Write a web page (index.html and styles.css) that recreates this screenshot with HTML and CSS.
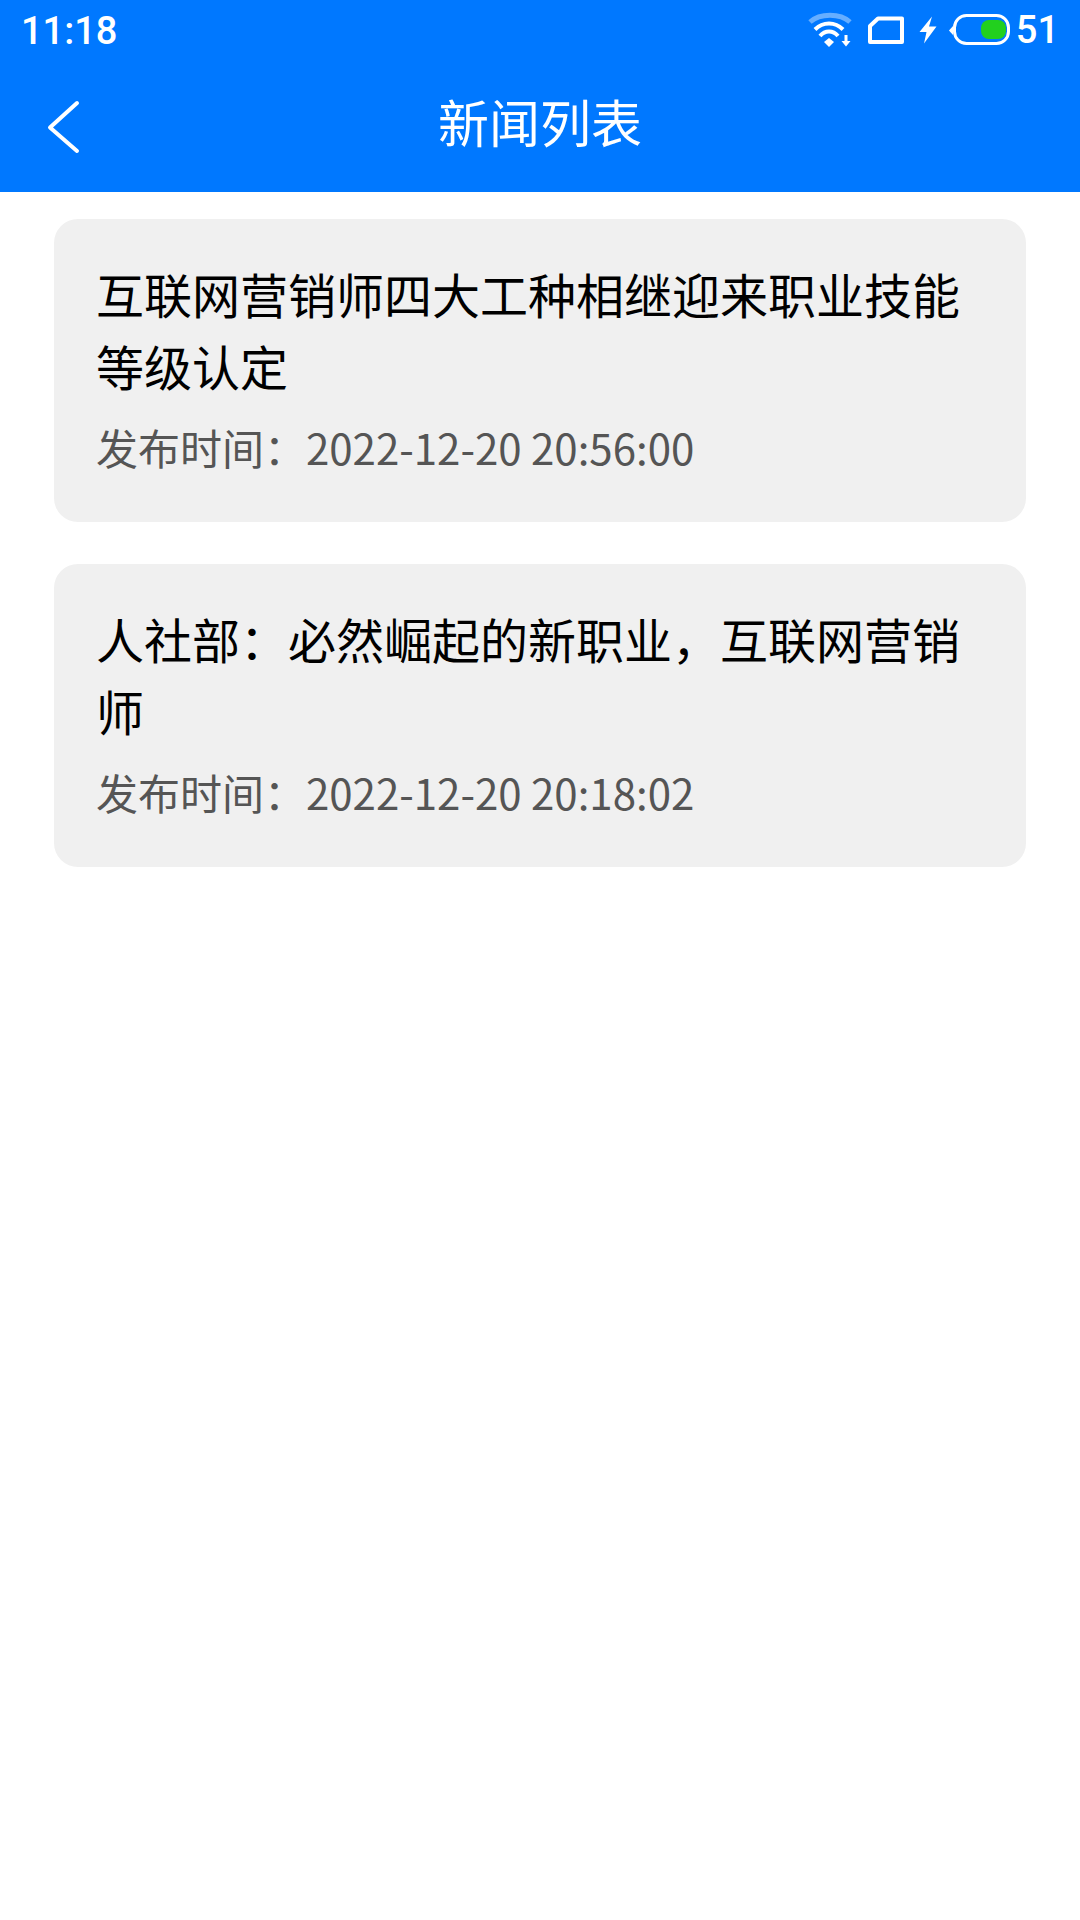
FILE: index.html
```html
<!DOCTYPE html>
<html lang="zh-CN">
<head>
<meta charset="utf-8">
<title>新闻列表</title>
<link rel="stylesheet" href="styles.css">
</head>
<body>
<header class="top">
  <div class="status">
    <span class="clock">11:18</span>
    <div class="status-icons">
      <svg class="ic-wifi" width="44" height="36" viewBox="0 0 44 36" fill="none">
        <path d="M2 10C12 1 32 1 42 10" stroke="#fff" stroke-opacity=".4" stroke-width="5"/>
        <path d="M7 17.500C15 9.500 27 9.500 35 17.500" stroke="#fff" stroke-width="4"/>
        <path d="M12 24C17 18 25 18 30 24" stroke="#fff" stroke-width="4"/>
        <path d="M16 30L21 26L26 30L21 35Z" fill="#fff"/>
        <path d="M38 23V30" stroke="#fff" stroke-width="3"/>
        <path d="M33.500 29H42.500L38 34.500Z" fill="#fff"/>
      </svg>
      <svg class="ic-sim" width="38" height="30" viewBox="0 0 38 30" fill="none">
        <path d="M11 3.500H35V27H3V11Z" stroke="#fff" stroke-width="4" stroke-linejoin="round"/>
      </svg>
      <svg class="ic-bolt" width="18" height="28" viewBox="0 0 18 28">
        <path d="M13 0.500L0.500 16H7.500L5 27.500L17.500 10.500H10Z" fill="#fff"/>
      </svg>
      <svg class="ic-batt" width="62" height="32" viewBox="0 0 62 32" fill="none">
        <path d="M0 16.500L4 12V21Z" fill="#fff"/>
        <rect x="5.500" y="1.500" width="54" height="28" rx="12" stroke="#fff" stroke-width="3"/>
        <rect x="32" y="6" width="25" height="19" rx="8" fill="#22d01e"/>
      </svg>
      <span class="level">51</span>
    </div>
  </div>
  <div class="nav">
    <svg class="back" width="34" height="54" viewBox="0 0 34 54" fill="none">
      <path d="M30 3L3 27.500L30 51" stroke="#fff" stroke-width="4" stroke-linecap="round" stroke-linejoin="round"/>
    </svg>
    <h1 class="title">新闻列表</h1>
  </div>
</header>
<main class="list">
  <article class="card">
    <h2 class="card-title">互联网营销师四大工种相继迎来职业技能等级认定</h2>
    <p class="card-meta">发布时间：2022-12-20 20:56:00</p>
  </article>
  <article class="card">
    <h2 class="card-title">人社部：必然崛起的新职业，互联网营销师</h2>
    <p class="card-meta">发布时间：2022-12-20 20:18:02</p>
  </article>
</main>
</body>
</html>
```

FILE: styles.css
```css
* { box-sizing: border-box; }
html, body { margin: 0; padding: 0; background: #fff; }
body {
  width: 1080px;
  height: 1920px;
  overflow: hidden;
  font-family: "Noto Sans CJK SC", "Noto Sans", sans-serif;
}
.top { background: #0078ff; height: 192px; color: #fff; }
.status {
  height: 60px;
  display: flex;
  align-items: center;
  justify-content: space-between;
  padding: 0 21px 0 21px;
}
.clock { font-family: Roboto, sans-serif; font-size: 38px; font-weight: 500; line-height: 60px; position: relative; top: 1px; }
.status-icons { display: flex; align-items: center; }
.ic-wifi { margin-right: 15px; }
.ic-sim { margin-right: 14px; }
.ic-bolt { margin-right: 12px; }
.ic-batt { margin-right: 5px; }
.level { font-family: Roboto, sans-serif; font-size: 38px; font-weight: 500; }
.nav {
  height: 132px;
  display: flex;
  align-items: center;
  justify-content: center;
  position: relative;
}
.back { position: absolute; left: 47px; top: 40px; }
.title { margin: 0 0 11px; font-size: 51px; font-weight: 400; line-height: 72px; }
.list {
  display: flex;
  flex-direction: column;
  gap: 42px;
  padding: 27px 54px 0;
}
.card {
  height: 303px;
  padding: 39px 42px 0;
  background: #f0f0f0;
  border-radius: 24px;
}
.card-title {
  margin: 0;
  font-size: 48px;
  font-weight: 400;
  line-height: 71.5px;
  color: #000;
}
.card-meta {
  margin: 16px 0 0;
  font-size: 42px;
  line-height: 60px;
  color: #555;
}
```
